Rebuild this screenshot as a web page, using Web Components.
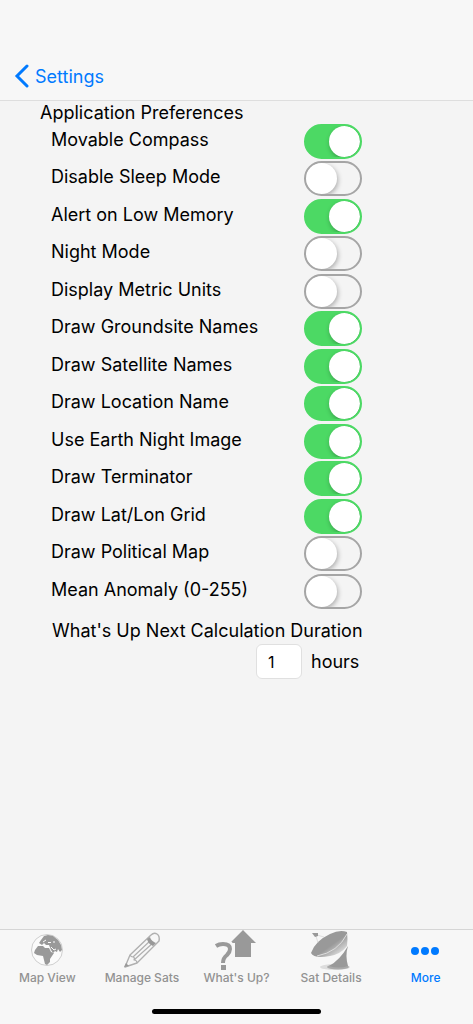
<!DOCTYPE html>
<html lang="en">
<head>
<meta charset="utf-8">
<meta name="viewport" content="width=device-width, initial-scale=1">
<title>Application Preferences</title>
<style>
    html, body {
        height: 100%;
        margin: 0;
    }

    body {
        background-color: #f4f4f4;
        color: #000;
        font-family: Inter, "Liberation Sans", sans-serif;
        font-size: 18px;
    }
</style>
</head>
<body>
<app-screen>
    <nav-bar slot="top" label="Settings"></nav-bar>
    <preference-list heading="Application Preferences">
        <preference-switch checked>Movable Compass</preference-switch>
        <preference-switch>Disable Sleep Mode</preference-switch>
        <preference-switch checked>Alert on Low Memory</preference-switch>
        <preference-switch>Night Mode</preference-switch>
        <preference-switch>Display Metric Units</preference-switch>
        <preference-switch checked>Draw Groundsite Names</preference-switch>
        <preference-switch checked>Draw Satellite Names</preference-switch>
        <preference-switch checked>Draw Location Name</preference-switch>
        <preference-switch checked>Use Earth Night Image</preference-switch>
        <preference-switch checked>Draw Terminator</preference-switch>
        <preference-switch checked>Draw Lat/Lon Grid</preference-switch>
        <preference-switch>Draw Political Map</preference-switch>
        <preference-switch>Mean Anomaly (0-255)</preference-switch>
    </preference-list>
    <duration-field value="1" unit="hours">What's Up Next Calculation Duration</duration-field>
    <tab-bar slot="bottom">
        <tab-item label="Map View">
            <svg width="34" height="34" viewBox="0 0 34 34">
                <circle cx="17" cy="17" r="15.5" fill="#fbfbfb" stroke="#cfcfcf"/>
                <path fill="#999" d="M5 17L8 13 13 13 15 15 19 15 21 19 24 20 22 23 20 26 20 29 17 32 15 31 14 27 13 23 7 22 4 20z"/>
                <path fill="#999" d="M9 10L11 7 14 3 18 2 23 3 28 7 31 12 32 17 30 19 28 16 27 19 25 18 23 20 21 17 19 12 16 12 14 10 12 12z"/>
                <path fill="none" stroke="#fbfbfb" d="M13 9l3-2M18 9.500l3 0M23 9l2 0M21 14l3 3 2-1"/>
            </svg>
        </tab-item>
        <tab-item label="Manage Sats">
            <svg width="36" height="36" viewBox="0 0 36 36">
                <g fill="#f7f7f7" stroke="#b0b0b0" stroke-width="1.400" stroke-linejoin="round">
                    <path d="M1 35l5-12L27 3q3-3 6-1t2 7L13 31z"/>
                    <path fill="none" d="M6 23q1 2 3 2t1 3q3 0 3 3M9 25L27 8M10 28L30 10" stroke-width="1.200"/>
                </g>
                <path fill="#999" d="M23 7l3-2q1 4 6 6l-3 3q-5-2-6-7zM0 35l2-4 3 3z"/>
            </svg>
        </tab-item>
        <tab-item label="What's Up?">
            <svg width="40" height="40" viewBox="0 0 40 40">
                <path fill="#999" d="M27 0L40 13H35V27H19V13H14z"/>
                <path fill="none" stroke="#f7f7f7" stroke-width="7" d="M2 15q3-2 6-2 7 0 7 6 0 3-4 6-3 2-3 5"/>
                <path fill="none" stroke="#999" stroke-width="4" d="M0 16q3-2 7-2 7 0 7 5 0 3-3 6-4 3-4 8"/>
                <path fill="#999" d="M5 35h5v5H5z"/>
            </svg>
        </tab-item>
        <tab-item label="Sat Details">
            <svg width="40" height="40" viewBox="0 0 40 40">
                <defs>
                    <linearGradient id="dish" x1="0" y1="0" x2="1" y2="1">
                        <stop offset="0.550" stop-color="#999"/>
                        <stop offset="0.850" stop-color="#ddd"/>
                    </linearGradient>
                </defs>
                <ellipse cx="24" cy="37" rx="15" ry="3" fill="#ddd"/>
                <ellipse cx="27" cy="37" rx="11" ry="2.500" fill="#aaa"/>
                <path fill="#999" d="M37 16q-3 9 0 20-9 3-19 0 11-6 19-20z"/>
                <path fill="url(#dish)" d="M0 23Q4 11 19 4 29-1 36 2q1 7 0 14-6 8-17 10Q3 29 0 23z"/>
                <path fill="none" stroke="#ddd" d="M6 26Q27 22 36 4"/>
                <path fill="none" stroke="#ccc" stroke-width="0.600" d="M6 5l7 2M5 6l2 7"/>
                <path fill="#999" d="M1 3l6 0 0 3-3 1z"/>
            </svg>
        </tab-item>
        <tab-item label="More" active>
            <svg width="30" height="34" viewBox="0 0 30 34" fill="currentColor">
                <circle cx="4" cy="18" r="4"/>
                <circle cx="14" cy="18" r="4"/>
                <circle cx="24" cy="18" r="4"/>
            </svg>
        </tab-item>
    </tab-bar>
</app-screen>

<script>
const screenTemplate = document.createElement("template")
screenTemplate.innerHTML = /*html*/`
    <style>
        :host {
            display: flex;
            flex-direction: column;
            min-height: 100%;
        }

        main {
            flex-grow: 1;
        }
    </style>
    <slot name="top"></slot>
    <main><slot></slot></main>
    <slot name="bottom"></slot>
`

class AppScreen extends HTMLElement {
    constructor() {
        super()
        this.attachShadow({ mode: "open" }).appendChild(screenTemplate.content.cloneNode(true))
    }
}
customElements.define("app-screen", AppScreen)

const navBar = document.createElement("template")
navBar.innerHTML = /*html*/`
    <style>
        :host {
            display: flex;
            padding: 52px 14px 0;
            background-color: #f7f7f7;
            border-bottom: 1px solid #dedede;
        }

        a {
            display: flex;
            align-items: center;
            gap: 5px;
            height: 48px;
            color: #007aff;
            text-decoration: none;
        }
    </style>
    <a href="#settings">
        <svg width="16" height="24" viewBox="0 0 16 24" fill="none" stroke="currentColor" stroke-width="3" stroke-linecap="round">
            <path d="M13 2L3 12L13 22"/>
        </svg>
        <span></span>
    </a>
`

class NavBar extends HTMLElement {
    constructor() {
        super()
        this.attachShadow({ mode: "open" }).appendChild(navBar.content.cloneNode(true))
    }

    connectedCallback() {
        this.shadowRoot.querySelector("span").textContent = this.getAttribute("label")
    }
}
customElements.define("nav-bar", NavBar)

const preferenceList = document.createElement("template")
preferenceList.innerHTML = /*html*/`
    <style>
        :host {
            display: block;
        }

        h1 {
            margin: 0;
            padding-left: 40px;
            font-size: inherit;
            font-weight: 400;
            line-height: 23px;
        }

        ::slotted(*) {
            height: 37px;
        }

        ::slotted(:nth-child(even)) {
            height: 38px;
        }
    </style>
    <h1></h1>
    <slot></slot>
`

class PreferenceList extends HTMLElement {
    constructor() {
        super()
        this.attachShadow({ mode: "open" }).appendChild(preferenceList.content.cloneNode(true))
    }

    connectedCallback() {
        this.shadowRoot.querySelector("h1").textContent = this.getAttribute("heading")
    }
}
customElements.define("preference-list", PreferenceList)

const preferenceSwitch = document.createElement("template")
preferenceSwitch.innerHTML = /*html*/`
    <style>
        :host {
            display: flex;
            align-items: flex-start;
            padding-left: 51px;
        }

        label {
            width: 253px;
            line-height: 32px;
        }

        input {
            appearance: none;
            display: flex;
            box-sizing: border-box;
            width: 58px;
            height: 35px;
            margin: 0;
            padding: 0;
            border: 2px solid #a5a5a5;
            border-radius: 18px;
            background-color: #f4f4f4;
            overflow: hidden;
            cursor: pointer;
        }

        input::before {
            content: "";
            width: 31px;
            height: 31px;
            border-radius: 50%;
            background-color: #fff;
            box-shadow: 1px 2px 5px rgba(0, 0, 0, 0.3);
        }

        input:checked {
            justify-content: flex-end;
            border-color: #4cd964;
            background-color: #4cd964;
        }
    </style>
    <label for="toggle"><slot></slot></label>
    <input id="toggle" type="checkbox" role="switch">
`

class PreferenceSwitch extends HTMLElement {
    constructor() {
        super()
        this.attachShadow({ mode: "open" }).appendChild(preferenceSwitch.content.cloneNode(true))
    }

    connectedCallback() {
        this.shadowRoot.getElementById("toggle").checked = this.hasAttribute("checked")
    }
}
customElements.define("preference-switch", PreferenceSwitch)

const durationField = document.createElement("template")
durationField.innerHTML = /*html*/`
    <style>
        :host {
            display: block;
            padding: 6px 0 0 52px;
        }

        label {
            display: block;
            line-height: 27px;
        }

        #field {
            display: flex;
            align-items: center;
            gap: 9px;
            padding-left: 204px;
        }

        input {
            box-sizing: border-box;
            width: 46px;
            height: 35px;
            padding: 0 11px;
            border: 1px solid #e0e0e0;
            border-radius: 6px;
            background-color: #fff;
            font: inherit;
            font-size: 16px;
        }
    </style>
    <label for="amount"><slot></slot></label>
    <div id="field">
        <input id="amount" type="text" inputmode="numeric">
        <span></span>
    </div>
`

class DurationField extends HTMLElement {
    constructor() {
        super()
        this.attachShadow({ mode: "open" }).appendChild(durationField.content.cloneNode(true))
    }

    connectedCallback() {
        this.shadowRoot.getElementById("amount").value = this.getAttribute("value")
        this.shadowRoot.querySelector("span").textContent = this.getAttribute("unit")
    }
}
customElements.define("duration-field", DurationField)

const tabBar = document.createElement("template")
tabBar.innerHTML = /*html*/`
    <style>
        :host {
            display: block;
            border-top: 1px solid #d5d5d5;
            background-color: #f7f7f7;
        }

        nav {
            display: flex;
        }

        ::slotted(*) {
            flex: 1 1 0;
        }

        /* home indicator */
        #home {
            width: 169px;
            height: 5px;
            margin: 23px auto 10px;
            border-radius: 3px;
            background-color: #000;
        }
    </style>
    <nav><slot></slot></nav>
    <div id="home"></div>
`

class TabBar extends HTMLElement {
    constructor() {
        super()
        this.attachShadow({ mode: "open" }).appendChild(tabBar.content.cloneNode(true))
    }
}
customElements.define("tab-bar", TabBar)

const tabItem = document.createElement("template")
tabItem.innerHTML = /*html*/`
    <style>
        :host {
            display: block;
            color: #929292;
        }

        :host([active]) {
            color: #007aff;
        }

        a {
            display: flex;
            flex-direction: column;
            align-items: center;
            color: inherit;
            font-size: 12px;
            font-weight: 500;
            line-height: 16px;
            text-decoration: none;
            white-space: nowrap;
        }

        #icon {
            display: flex;
            align-items: center;
            justify-content: center;
            height: 40px;
        }

        ::slotted(svg) {
            overflow: visible;
        }
    </style>
    <a href="#">
        <div id="icon"><slot></slot></div>
        <span></span>
    </a>
`

class TabItem extends HTMLElement {
    constructor() {
        super()
        this.attachShadow({ mode: "open" }).appendChild(tabItem.content.cloneNode(true))
    }

    connectedCallback() {
        this.shadowRoot.querySelector("span").textContent = this.getAttribute("label")
    }
}
customElements.define("tab-item", TabItem)
</script>
</body>
</html>
